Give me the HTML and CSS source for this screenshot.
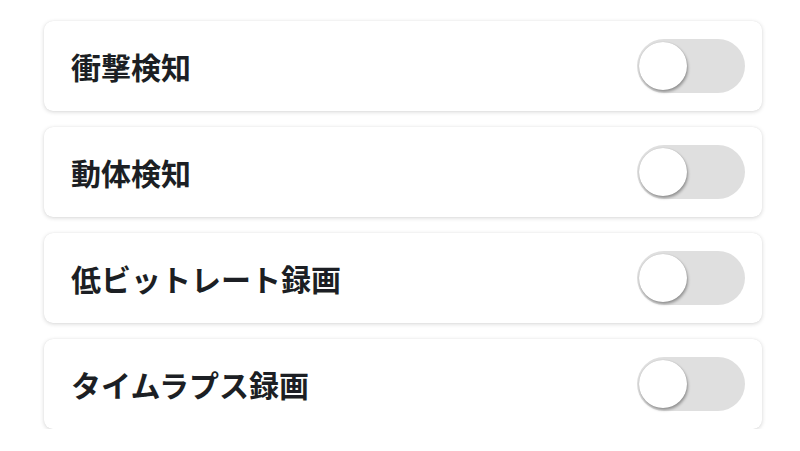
FILE: index.html
```html
<!DOCTYPE html>
<html lang="ja">
<head>
  <meta charset="UTF-8">
  <title>録画設定</title>
  <link rel="stylesheet" href="styles.css">
</head>
<body>
  <div class="list">
    <div class="item">
      <span class="label">衝撃検知</span>
      <label class="switch"><input type="checkbox"><span class="knob"></span></label>
    </div>
    <div class="item">
      <span class="label">動体検知</span>
      <label class="switch"><input type="checkbox"><span class="knob"></span></label>
    </div>
    <div class="item">
      <span class="label">低ビットレート録画</span>
      <label class="switch"><input type="checkbox"><span class="knob"></span></label>
    </div>
    <div class="item">
      <span class="label">タイムラプス録画</span>
      <label class="switch"><input type="checkbox"><span class="knob"></span></label>
    </div>
  </div>
</body>
</html>
```

FILE: styles.css
```css
body {
  margin: 0;
  padding: 21px 38px 0 44px;
  background: #ffffff;
  font-family: "Noto Sans CJK JP", "Noto Sans", sans-serif;
  color: #1c1f24;
}
.list {
  display: flex;
  flex-direction: column;
  gap: 16px;
}
.item {
  height: 90px;
  box-sizing: border-box;
  padding: 0 17px 0 27px;
  display: flex;
  align-items: center;
  justify-content: space-between;
  background: #fff;
  border-radius: 9px;
  box-shadow: 0 1px 4px rgba(0,0,0,0.16), 0 0 1px rgba(0,0,0,0.08);
}
.label {
  font-size: 30px;
  font-weight: 700;
  line-height: 1;
}
.switch {
  position: relative;
  width: 108px;
  height: 54px;
  border-radius: 27px;
  background: #dfdfdf;
  cursor: pointer;
}
.switch input {
  display: none;
}
.knob {
  position: absolute;
  left: 2px;
  top: 3px;
  width: 48px;
  height: 48px;
  border-radius: 50%;
  background: #fff;
  box-shadow: 1px 2px 3px rgba(0,0,0,0.35), 0 0 1px rgba(0,0,0,0.2);
  transition: left 0.2s;
}
.switch input:checked + .knob {
  left: 58px;
}
```
